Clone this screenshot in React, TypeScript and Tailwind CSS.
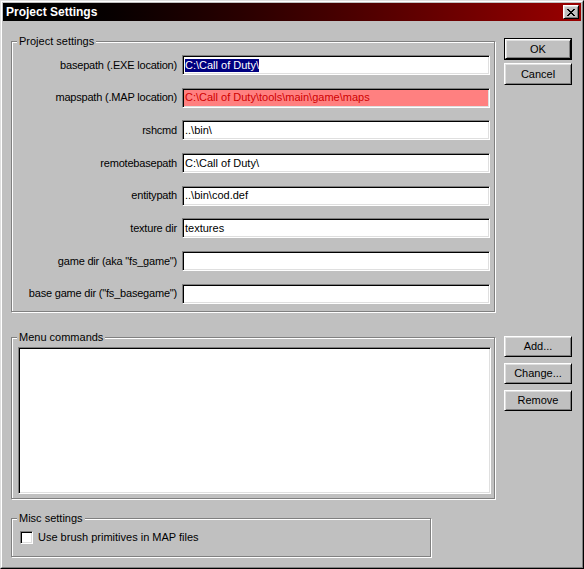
import React from 'react';

const raised =
  'border border-t-white border-l-white border-r-black border-b-black shadow-[inset_1px_1px_0_#dfdfdf,inset_-1px_-1px_0_#808080]';
const sunken =
  'border border-t-[#808080] border-l-[#808080] border-r-white border-b-white shadow-[inset_1px_1px_0_#000,inset_-1px_-1px_0_#dfdfdf]';

const Group: React.FC<{ title: string; className?: string; children?: React.ReactNode }> = ({ title, className, children }) => (
  <div className={`relative border border-[#808080] shadow-[1px_1px_0_#fff,inset_1px_1px_0_#fff] ${className ?? ''}`}>
    <span className="absolute left-[5px] -top-[7px] bg-[#c0c0c0] px-[2px] leading-[13px]">{title}</span>
    {children}
  </div>
);

const Button: React.FC<{ label: string; isDefault?: boolean; h?: string }> = ({ label, isDefault, h = 'h-[21px]' }) =>
  isDefault ? (
    <div className={`w-[68px] ${h} border border-black`}>
      <div className={`h-full flex items-center justify-center ${raised}`}>{label}</div>
    </div>
  ) : (
    <div className={`w-[68px] ${h} flex items-center justify-center ${raised}`}>{label}</div>
  );

const CloseGlyph = () => (
  <svg width="8" height="7" viewBox="0 0 8 7" shapeRendering="crispEdges">
    <path
      fill="#000"
      d="M0 0h2v1H0zM6 0h2v1H6zM1 1h2v1H1zM5 1h2v1H5zM2 2h4v1H2zM3 3h2v1H3zM2 4h4v1H2zM1 5h2v1H1zM5 5h2v1H5zM0 6h2v1H0zM6 6h2v1H6z"
    />
  </svg>
);

const fields: { label: string; value: string; kind?: 'selected' | 'error' }[] = [
  { label: 'basepath (.EXE location)', value: 'C:\\Call of Duty\\', kind: 'selected' },
  { label: 'mapspath (.MAP location)', value: 'C:\\Call of Duty\\tools\\main\\game\\maps', kind: 'error' },
  { label: 'rshcmd', value: '..\\bin\\' },
  { label: 'remotebasepath', value: 'C:\\Call of Duty\\' },
  { label: 'entitypath', value: '..\\bin\\cod.def' },
  { label: 'texture dir', value: 'textures' },
  { label: 'game dir (aka "fs_game")', value: '' },
  { label: 'base game dir ("fs_basegame")', value: '' },
];

export default function App() {
  return (
    <div className="w-[584px] h-[569px] bg-[#c0c0c0] border border-t-[#dfdfdf] border-l-[#dfdfdf] border-r-black border-b-black font-['Liberation_Sans',Arial,sans-serif] text-[11px] text-black leading-[13px]">
      <div className="h-full border border-t-white border-l-white border-r-[#808080] border-b-[#808080] p-px flex flex-col">
        {/* title bar */}
        <div className="h-[18px] shrink-0 flex items-center justify-between bg-linear-to-r from-black to-[#9a0000] pl-[3px] pr-[2px]">
          <span className="text-white font-bold text-[12px]">Project Settings</span>
          <div className={`w-[16px] h-[14px] bg-[#c0c0c0] flex items-center justify-center ${raised}`}>
            <CloseGlyph />
          </div>
        </div>

        {/* project settings */}
        <div className="flex items-start pl-[8px]">
          <Group title="Project settings" className="mt-[20px] w-[484px] h-[271px]">
            <div className="pt-[13px] flex flex-col gap-[12.7px]">
              {fields.map((f) => (
                <div key={f.label} className="flex items-center h-[20px]">
                  <div className="w-[165px] text-right whitespace-nowrap tracking-[-0.2px]">{f.label}</div>
                  <div
                    className={`ml-[5px] w-[308px] h-[20px] px-[2px] flex items-center whitespace-nowrap ${sunken} ${
                      f.kind === 'error' ? 'bg-[#ff8080] text-[#d00000]' : 'bg-white'
                    }`}
                  >
                    {f.kind === 'selected' ? (
                      <span className="bg-[#000080] text-white">{f.value}</span>
                    ) : (
                      f.value
                    )}
                  </div>
                </div>
              ))}
            </div>
          </Group>
          <div className="ml-[9px] mt-[17px] flex flex-col gap-[3px]">
            <Button label="OK" isDefault h="h-[22px]" />
            <Button label="Cancel" h="h-[22px]" />
          </div>
        </div>

        {/* menu commands */}
        <div className="flex items-start pl-[8px]">
          <Group title="Menu commands" className="mt-[25px] w-[484px] h-[162px]">
            <div className={`mt-[9px] ml-[6px] w-[473px] h-[147px] bg-white ${sunken}`} />
          </Group>
          <div className="ml-[9px] mt-[24px] flex flex-col gap-[6px]">
            <Button label="Add..." />
            <Button label="Change..." />
            <Button label="Remove" />
          </div>
        </div>

        {/* misc */}
        <div className="pl-[8px]">
          <Group title="Misc settings" className="mt-[19px] w-[420px] h-[39px]">
            <div className="pt-[12px] pl-[8px] flex items-center">
              <div className={`w-[13px] h-[13px] bg-white ${sunken}`} />
              <span className="ml-[5px]">Use brush primitives in MAP files</span>
            </div>
          </Group>
        </div>
      </div>
    </div>
  );
}
